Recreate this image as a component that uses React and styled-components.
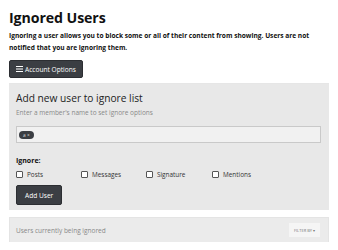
import React from "react";
import styled, { createGlobalStyle } from "styled-components";

const Global = createGlobalStyle`
  html, body { margin: 0; padding: 0; background: #fff; }
  body { font-family: "Open Sans", "Noto Sans", sans-serif; color: #111; }
  * { box-sizing: border-box; }
`;

const Page = styled.div`
  padding: 8px 9px 0 9px;
  width: 338px;
`;

const Title = styled.h1`
  margin: 0;
  font-size: 14.2px;
  font-weight: 700;
  line-height: 19px;
  letter-spacing: -0.1px;
`;

const Intro = styled.p`
  margin: 3px 0 0;
  font-size: 6.6px;
  font-weight: 700;
  line-height: 11.5px;
`;

const ButtonRow = styled.div`
  display: flex;
  margin-top: ${(p) => p.$mt || 0}px;
`;

const DarkButton = styled.button`
  display: inline-flex;
  align-items: center;
  gap: 2px;
  background: #3b3e43;
  color: #fff;
  border: 1px solid #2c2e32;
  border-radius: 2px;
  font-family: inherit;
  font-size: ${(p) => p.$fs || 6.6}px;
  height: ${(p) => p.$h || 18}px;
  padding: 0 ${(p) => p.$px || 6}px;
  cursor: pointer;
`;

const Rule = styled.hr`
  border: 0;
  border-top: 1px solid #e6e6e6;
  margin: 5px 0 0;
`;

const Panel = styled.div`
  background: #e8e8e8;
  padding: 6px 8px 5px 7px;
  width: 320px;
`;

const PanelTitle = styled.div`
  font-size: 10.2px;
  line-height: 16px;
  color: #222;
`;

const Hint = styled.div`
  margin-top: 3px;
  font-size: 6.5px;
  line-height: 8px;
  color: #888;
`;

const InputBox = styled.div`
  margin-top: 9px;
  height: 17px;
  background: #f1f1f1;
  border: 1px solid #c9c9c9;
  display: flex;
  align-items: center;
  padding: 0 2px;
`;

const Tag = styled.span`
  display: inline-flex;
  align-items: center;
  justify-content: center;
  background: #3b3e43;
  color: #ddd;
  font-size: 4.8px;
  height: 8px;
  padding: 0 4px;
  border-radius: 4px;
`;

const Label = styled.div`
  margin-top: 13px;
  font-size: 7px;
  line-height: 9px;
  font-weight: 700;
`;

const CheckRow = styled.div`
  display: grid;
  grid-template-columns: 65px 65px 66px 65px;
  margin-top: 4.5px;
  height: 9px;
`;

const Check = styled.label`
  display: flex;
  align-items: center;
  gap: 4px;
  font-size: 6.4px;
  line-height: 9px;
  color: #333;
`;

const Box = styled.span`
  width: 7px;
  height: 7px;
  border: 1px solid #555;
  border-radius: 1px;
  background: #fff;
`;

const ListPanel = styled.div`
  margin-top: 7px;
  width: 320px;
  border: 1px solid #e4e4e4;
  border-bottom: 0;
`;

const ListHeader = styled.div`
  background: #ebebeb;
  height: 24px;
  display: flex;
  align-items: center;
  justify-content: space-between;
  padding: 0 8px 0 6px;
`;

const ListTitle = styled.span`
  font-size: 6.5px;
  color: #888;
`;

const FilterBtn = styled.span`
  background: #f5f5f5;
  color: #777;
  font-size: 4px;
  height: 14px;
  padding: 0 5px;
  display: inline-flex;
  align-items: center;
  gap: 1px;
`;

const Checkbox = ({ label }) => (
  <Check>
    <Box />
    {label}
  </Check>
);

export default function App() {
  return (
    <Page>
      <Global />
      <Title>Ignored Users</Title>
      <Intro>
        Ignoring a user allows you to block some or all of their content from showing. Users are not
        notified that you are ignoring them.
      </Intro>
      <ButtonRow $mt={7}>
        <DarkButton $px={6}>
          <svg width="7" height="6" viewBox="0 0 7 6">
            <rect x="0" y="0" width="7" height="1" fill="#fff" />
            <rect x="0" y="2.5" width="7" height="1" fill="#fff" />
            <rect x="0" y="5" width="7" height="1" fill="#fff" />
          </svg>
          Account Options
        </DarkButton>
      </ButtonRow>
      <Rule />
      <Panel>
        <PanelTitle>Add new user to ignore list</PanelTitle>
        <Hint>Enter a member's name to set ignore options</Hint>
        <InputBox>
          <Tag>a ×</Tag>
        </InputBox>
        <Label>Ignore:</Label>
        <CheckRow>
          <Checkbox label="Posts" />
          <Checkbox label="Messages" />
          <Checkbox label="Signature" />
          <Checkbox label="Mentions" />
        </CheckRow>
        <ButtonRow $mt={6.5}>
          <DarkButton $h={20} $px={8}>Add User</DarkButton>
        </ButtonRow>
      </Panel>
      <ListPanel>
        <ListHeader>
          <ListTitle>Users currently being ignored</ListTitle>
          <FilterBtn>FILTER BY ▾</FilterBtn>
        </ListHeader>
      </ListPanel>
    </Page>
  );
}
